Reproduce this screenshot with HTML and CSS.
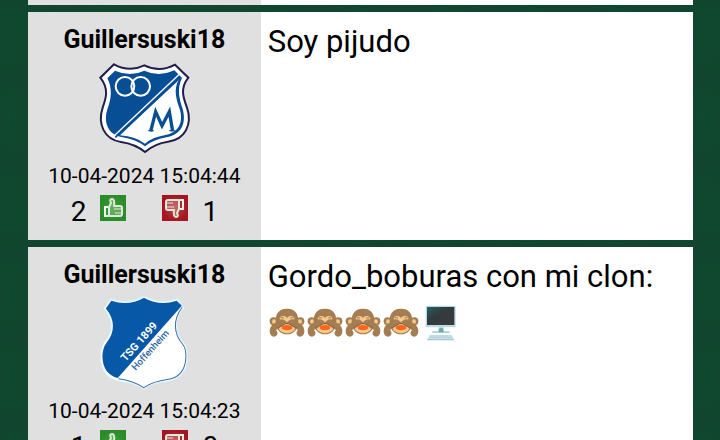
FILE: index.html
```
<!DOCTYPE html>
<html lang="es">
<head>
<meta charset="utf-8">
<meta name="viewport" content="width=device-width, initial-scale=1">
<title>Comentarios</title>
<link rel="stylesheet" href="styles.css">
</head>
<body>
<svg class="defs" aria-hidden="true">
  <defs>
    <linearGradient id="screen" x1="0" y1="0" x2="1" y2="1">
      <stop offset="0" stop-color="#285c66"/><stop offset=".4" stop-color="#323b40"/><stop offset="1" stop-color="#3b3a3b"/>
    </linearGradient>
    <radialGradient id="green"><stop offset="0" stop-color="#419b3b"/><stop offset="1" stop-color="#2b8b2b"/></radialGradient>
    <radialGradient id="red"><stop offset="0" stop-color="#b8444a"/><stop offset="1" stop-color="#a51420"/></radialGradient>
    <symbol id="monkey" viewBox="24 36 114 96">
      <circle cx="41" cy="79" r="12" fill="#a47d53"/><circle cx="121" cy="79" r="12" fill="#a47d53"/>
      <circle cx="43" cy="80" r="7" fill="#f5c989"/><circle cx="119" cy="80" r="7" fill="#f5c989"/>
      <path d="M81 41C57 40 46 57 47 80C48 104 61 118 81 118C101 118 114 104 115 80C116 57 105 40 81 41Z" fill="#a47d53"/>
      <path d="M58 71Q62 61 70 63Q78 63 81 69Q84 63 92 63Q101 61 104 71L94 78H67Z" fill="#f5c989"/>
      <ellipse cx="81" cy="97" rx="25" ry="18" fill="#f5c989"/>
      <ellipse cx="81" cy="98" rx="16" ry="8" fill="#ff641b"/>
      <path d="M29 108Q29 94 41 86L64 73Q76 73 80 85L48 105Q55 112 51 120Q45 127 37 124Q29 120 29 108Z" fill="#a47d53"/>
      <path d="M133 108Q133 94 121 86L98 73Q86 73 82 85L114 105Q107 112 111 120Q117 127 125 124Q133 120 133 108Z" fill="#a47d53"/>
      <path d="M51 99L79 85M111 99L83 85M62 68L72 69M91 69L100 68" fill="none" stroke="#775b43" stroke-width="2"/>
      <path d="M78 83L81 89L84 83Z" fill="#49362c"/>
    </symbol>
    <symbol id="computer" viewBox="480 26 114 114">
      <path d="M500 31H584Q587 31 587 34V93Q587 96 584 96H500Q497 96 497 93V34Q497 31 500 31Z" fill="#b8dbe7"/>
      <path d="M501 35H583V89H501Z" fill="url(#screen)"/>
      <path d="M536 96H550L552 108H569V113H517V108H534Z" fill="#a9cfdc"/>
      <path d="M539 98H548L551 111H536Z" fill="#72a5b8"/>
      <path d="M509 118H575L582 132V135H502V132Z" fill="#d4e6eb"/>
      <path d="M511 122H573M508 127H576" stroke="#8bb8c4" stroke-width="2" stroke-dasharray="5 2"/>
      <path d="M502 133H582" stroke="#83b0c0" stroke-width="2"/>
    </symbol>
    <symbol id="hand" viewBox="0 0 26 26">
      <path d="M9 12L11 8Q9 4 12 4Q15 4 14 11H20Q22 11 22 13V19Q22 21 20 21H9Z" fill="#fff" fill-opacity=".2" stroke="#dcebd3" stroke-width="2" stroke-linejoin="round"/>
      <path d="M8 12H5V21H8" fill="none" stroke="#eef6e8" stroke-width="2"/>
      <path d="M14 14H21M15 18H21" fill="none" stroke="#e2eddb" stroke-width="1"/>
    </symbol>
  </defs>
</svg>
<main class="thread">
  <article class="post post-end">
    <div class="author"></div>
    <div class="message"></div>
  </article>

  <article class="post">
    <div class="author">
      <h2 class="name">Guillersuski18</h2>
      <svg class="crest" viewBox="25 20 276 276" role="img" aria-label="Millonarios">
        <path d="M73 27Q119 52 164 30Q211 53 256 28L296 67C270 100 281 127 292 157C309 208 286 252 235 259Q194 265 166 290Q137 266 94 260C44 252 23 207 39 157C50 127 58 100 32 67Z" fill="#fff" stroke="#22204b" stroke-width="6"/>
        <path d="M76 46Q122 66 164 46Q207 66 254 45L277 68C261 99 269 132 279 161C291 205 275 238 230 246Q190 253 166 273Q141 253 99 246C58 240 40 206 53 162C65 132 69 99 53 69Z" fill="#074e94"/>
        <path d="M268 72C250 104 260 132 271 164C281 202 268 231 227 239Q187 246 166 265Q139 244 91 240Z" fill="#fff"/>
        <path d="M72 243L269 57" stroke="#fff" stroke-width="4"/>
        <path d="M77 246L272 67" stroke="#074e94" stroke-width="5"/>
        <g fill="none" stroke="#fff" stroke-width="6"><circle cx="106" cy="93" r="28"/><circle cx="153" cy="93" r="28"/></g>
        <path d="M183 228L198 169L217 211L239 169L249 228" fill="none" stroke="#074e94" stroke-width="10"/>
        <path d="M176 226H192M239 226H255" stroke="#074e94" stroke-width="4"/>
      </svg>
      <time class="date" datetime="2024-04-10T15:04:44">10-04-2024 15:04:44</time>
      <div class="votes">
        <span class="count">2</span>
        <button class="vote up" type="button" aria-label="Me gusta"><svg viewBox="0 0 26 26"><path d="M0 0H26V26H0Z" fill="url(#green)"/><use href="#hand"/></svg></button>
        <button class="vote down" type="button" aria-label="No me gusta"><svg viewBox="0 0 26 26"><path d="M0 0H26V26H0Z" fill="url(#red)"/><use href="#hand" transform="rotate(180 13 13)"/></svg></button>
        <span class="count">1</span>
      </div>
    </div>
    <div class="message">Soy pijudo</div>
  </article>

  <article class="post">
    <div class="author">
      <h2 class="name">Guillersuski18</h2>
      <svg class="crest" viewBox="28 30 270 270" role="img" aria-label="TSG 1899 Hoffenheim">
        <path d="M65 36Q119 54 163 27Q208 53 262 35L280 62C250 95 255 137 280 164Q291 178 291 207C291 248 267 273 231 278Q192 281 162 301Q132 281 93 278C57 272 35 247 35 207Q35 178 48 160C74 132 73 95 45 63Z" fill="#fff" stroke="#d5effc" stroke-width="3"/>
        <path d="M67 41Q119 58 163 32Q208 58 259 41L274 56L86 268C58 260 42 240 41 206Q41 180 53 164C78 135 79 97 51 64Z" fill="#0759a7"/>
        <path d="M275 60C247 97 250 138 276 168Q287 181 286 207C285 245 264 269 231 272Q191 277 162 296Q132 276 88 270" fill="none" stroke="#386fa6" stroke-width="3"/>
        <text class="crest-title" transform="translate(109 221) rotate(-48)">TSG 1899</text>
        <text class="crest-place" transform="translate(139 247) rotate(-48)">Hoffenheim</text>
      </svg>
      <time class="date" datetime="2024-04-10T15:04:23">10-04-2024 15:04:23</time>
      <div class="votes">
        <span class="count">1</span>
        <button class="vote up" type="button" aria-label="Me gusta"><svg viewBox="0 0 26 26"><path d="M0 0H26V26H0Z" fill="url(#green)"/><use href="#hand"/></svg></button>
        <button class="vote down" type="button" aria-label="No me gusta"><svg viewBox="0 0 26 26"><path d="M0 0H26V26H0Z" fill="url(#red)"/><use href="#hand" transform="rotate(180 13 13)"/></svg></button>
        <span class="count">0</span>
      </div>
    </div>
    <div class="message">Gordo_boburas con mi clon:
      <div class="emojis">
        <svg class="emoji" role="img" aria-label="🙈" viewBox="24 36 114 96"><use href="#monkey" x="24" y="36" width="114" height="96"/></svg>
        <svg class="emoji" role="img" aria-label="🙈" viewBox="24 36 114 96"><use href="#monkey" x="24" y="36" width="114" height="96"/></svg>
        <svg class="emoji" role="img" aria-label="🙈" viewBox="24 36 114 96"><use href="#monkey" x="24" y="36" width="114" height="96"/></svg>
        <svg class="emoji" role="img" aria-label="🙈" viewBox="24 36 114 96"><use href="#monkey" x="24" y="36" width="114" height="96"/></svg>
        <svg class="emoji" role="img" aria-label="🖥️" viewBox="480 26 114 114"><use href="#computer" x="480" y="26" width="114" height="114"/></svg>
      </div>
    </div>
  </article>
</main>
</body>
</html>
```
FILE: styles.css
```
* {
  box-sizing: border-box;
}

body {
  margin: 0;
  background: #10462f radial-gradient(circle at 14px 34px, #0e492e, #11452f 45px, transparent 70px) 0 0 / 86px 86px;
  color: #000;
  font-family: Roboto, "Liberation Sans", sans-serif;
}

.defs {
  position: absolute;
  width: 0;
  height: 0;
}

.thread {
  display: flex;
  flex-direction: column;
  gap: 7px;
  padding: 0 27px 7px 28px;
}

.post {
  display: grid;
  grid-template-columns: 35% 1fr;
  background: #fff;
}

.post-end {
  min-height: 5px;
}

.author {
  display: flex;
  flex-direction: column;
  align-items: center;
  background: #e0e0e0;
}

.post:not(.post-end) .author {
  padding: 14px 0 12px;
}

.name {
  margin: 0;
  font-size: 25px;
  font-weight: 700;
  line-height: 28px;
}

.crest {
  width: 92px;
  height: 92px;
  margin: 8px 0;
  overflow: visible;
}

.crest-title {
  fill: #fff;
  font-size: 32px;
  font-weight: 700;
}

.crest-place {
  fill: #2a65a3;
  font-size: 28px;
  font-weight: 500;
}

.date {
  font-size: 21px;
  line-height: 28px;
}

.votes {
  display: flex;
  align-items: flex-start;
  height: 34px;
  margin-top: 4px;
}

.count {
  font-size: 28px;
  line-height: 36px;
}

.vote {
  width: 26px;
  height: 26px;
  padding: 0;
  border: 0;
  background: none;
}

.vote svg {
  display: block;
}

.up {
  margin: 1px 18px 0 14px;
}

.down {
  margin: 1px 14px 0 18px;
}

.post:not(.post-end) .message {
  padding: 12px 7px;
  font-size: 31px;
  line-height: 36px;
}

.emojis {
  display: flex;
  padding-top: 9px;
}

.emoji {
  width: 38px;
  height: 38px;
}
```
